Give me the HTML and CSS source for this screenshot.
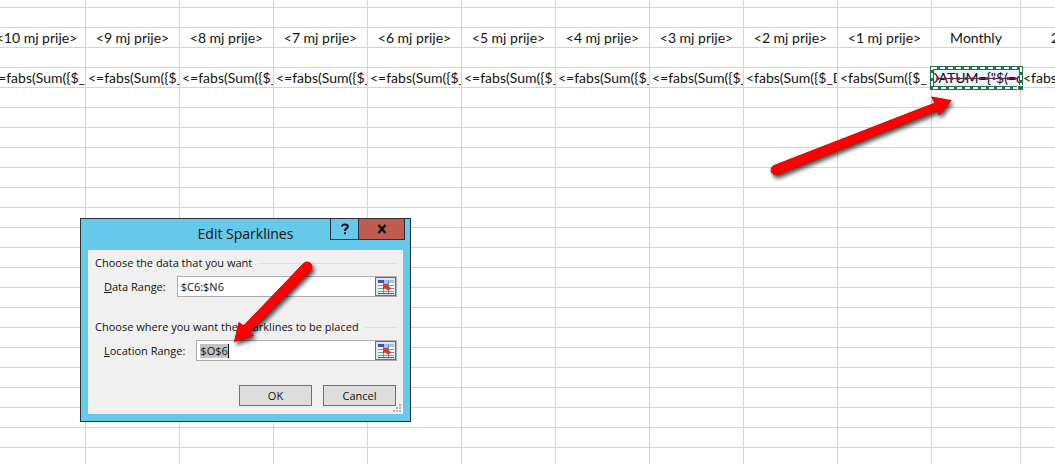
FILE: index.html
```
<!DOCTYPE html>
<html lang="en">
<head>
<meta charset="utf-8">
<title>Edit Sparklines</title>
<link rel="stylesheet" href="styles.css">
</head>
<body>
<main class="workbook">
<table class="sheet">
<colgroup><col class="col-first"><col span="9" class="col-month"><col class="col-monthly"><col class="col-rest"></colgroup>
<tbody>
<tr class="first"><td></td><td></td><td></td><td></td><td></td><td></td><td></td><td></td><td></td><td></td><td></td><td></td></tr>
<tr><td></td><td></td><td></td><td></td><td></td><td></td><td></td><td></td><td></td><td></td><td></td><td></td></tr>
<tr class="heads"><td>&lt;10 mj prije&gt;</td><td>&lt;9 mj prije&gt;</td><td>&lt;8 mj prije&gt;</td><td>&lt;7 mj prije&gt;</td><td>&lt;6 mj prije&gt;</td><td>&lt;5 mj prije&gt;</td><td>&lt;4 mj prije&gt;</td><td>&lt;3 mj prije&gt;</td><td>&lt;2 mj prije&gt;</td><td>&lt;1 mj prije&gt;</td><td>Monthly</td><td class="cut">2</td></tr>
<tr><td></td><td></td><td></td><td></td><td></td><td></td><td></td><td></td><td></td><td></td><td></td><td></td></tr>
<tr class="formulas"><td>&lt;=fabs(Sum({$_D</td><td>&lt;=fabs(Sum({$_</td><td>&lt;=fabs(Sum({$_</td><td>&lt;=fabs(Sum({$_</td><td>&lt;=fabs(Sum({$_</td><td>&lt;=fabs(Sum({$_</td><td>&lt;=fabs(Sum({$_</td><td>&lt;=fabs(Sum({$_</td><td>&lt;fabs(Sum({$_D</td><td>&lt;fabs(Sum({$_</td><td class="selected"><span class="clip"><span>DATUM={"$(=d</span></span>
<svg class="marquee" viewBox="0 0 93 24" aria-hidden="true">
<path d="M7 12.500H87" stroke="#2b3560" stroke-width="1"/>
<path d="M8 12.500H86" stroke="#d00020" stroke-width="3" stroke-linecap="round" stroke-dasharray="0 7"/>
<rect x="2" y="2" width="89" height="20" fill="none" stroke="#217346" stroke-width="4"/>
<rect x="2" y="2" width="89" height="20" fill="none" stroke="#fff" stroke-width="2" stroke-dasharray="5 3"/>
<path fill="#fff" d="M87 19h6v5h-6z"/>
<path fill="#217346" d="M88 20h5v4h-5z"/>
</svg></td><td>&lt;fabs(S</td></tr>
</tbody>
<tbody class="blank">
<tr><td></td><td></td><td></td><td></td><td></td><td></td><td></td><td></td><td></td><td></td><td></td><td></td></tr>
<tr><td></td><td></td><td></td><td></td><td></td><td></td><td></td><td></td><td></td><td></td><td></td><td></td></tr>
<tr><td></td><td></td><td></td><td></td><td></td><td></td><td></td><td></td><td></td><td></td><td></td><td></td></tr>
<tr><td></td><td></td><td></td><td></td><td></td><td></td><td></td><td></td><td></td><td></td><td></td><td></td></tr>
<tr><td></td><td></td><td></td><td></td><td></td><td></td><td></td><td></td><td></td><td></td><td></td><td></td></tr>
<tr><td></td><td></td><td></td><td></td><td></td><td></td><td></td><td></td><td></td><td></td><td></td><td></td></tr>
<tr><td></td><td></td><td></td><td></td><td></td><td></td><td></td><td></td><td></td><td></td><td></td><td></td></tr>
<tr><td></td><td></td><td></td><td></td><td></td><td></td><td></td><td></td><td></td><td></td><td></td><td></td></tr>
<tr><td></td><td></td><td></td><td></td><td></td><td></td><td></td><td></td><td></td><td></td><td></td><td></td></tr>
<tr><td></td><td></td><td></td><td></td><td></td><td></td><td></td><td></td><td></td><td></td><td></td><td></td></tr>
<tr><td></td><td></td><td></td><td></td><td></td><td></td><td></td><td></td><td></td><td></td><td></td><td></td></tr>
<tr><td></td><td></td><td></td><td></td><td></td><td></td><td></td><td></td><td></td><td></td><td></td><td></td></tr>
<tr><td></td><td></td><td></td><td></td><td></td><td></td><td></td><td></td><td></td><td></td><td></td><td></td></tr>
<tr><td></td><td></td><td></td><td></td><td></td><td></td><td></td><td></td><td></td><td></td><td></td><td></td></tr>
<tr><td></td><td></td><td></td><td></td><td></td><td></td><td></td><td></td><td></td><td></td><td></td><td></td></tr>
<tr><td></td><td></td><td></td><td></td><td></td><td></td><td></td><td></td><td></td><td></td><td></td><td></td></tr>
<tr><td></td><td></td><td></td><td></td><td></td><td></td><td></td><td></td><td></td><td></td><td></td><td></td></tr>
<tr><td></td><td></td><td></td><td></td><td></td><td></td><td></td><td></td><td></td><td></td><td></td><td></td></tr>
<tr class="last"><td></td><td></td><td></td><td></td><td></td><td></td><td></td><td></td><td></td><td></td><td></td><td></td></tr>
</tbody>
</table>

<form class="dialog" role="dialog" aria-labelledby="dialog-title">
<header class="titlebar">
<h1 class="title" id="dialog-title">Edit Sparklines</h1>
<div class="caption-buttons">
<button type="button" class="help" aria-label="Help"><svg width="10" height="12" viewBox="0 0 10 12"><path d="M2 3.500Q2.200 1.500 5 1.500Q7.800 1.500 7.800 3.500Q7.800 4.800 6.200 5.600Q5 6.200 5 8" fill="none" stroke="#111" stroke-width="2"/><path d="M4 9.200h2v2H4z" fill="#111"/></svg></button>
<button type="button" class="close" aria-label="Close"><svg width="10" height="10" viewBox="0 0 10 10"><path d="M1.500 1L8.500 9M8.500 1L1.500 9" stroke="#111" stroke-width="2.400"/></svg></button>
</div>
</header>
<div class="content">
<section class="group">
<h2 class="legend">Choose the data that you want</h2>
<div class="field">
<label for="data-range"><u>D</u>ata Range:</label>
<div class="picker"><input id="data-range" type="text" value="$C6:$N6"><button type="button" class="pick" aria-label="Select data range"><svg width="16" height="14" viewBox="0 0 16 14"><path fill="#fff" d="M0 0h16v14H0z"/><path fill="#a9c1ea" d="M0 0h16v3H0z"/><path fill="#3158ad" d="M0 0h6v3H0z"/><path d="M0 5.500H16M0 8.500H16M0 11.500H16M5.500 3V14M10.500 0V14" stroke="#6f91cb"/><path d="M0 13.500H16" stroke="#3158ad"/><path fill="#dc3c20" d="M5 3.500h6L9.700 5 13 8.500 10 11 7 8 5 9.500z"/></svg></button></div>
</div>
</section>
<section class="group">
<h2 class="legend">Choose where you want the sparklines to be placed</h2>
<div class="field">
<label for="location-range"><u>L</u>ocation Range:</label>
<div class="picker"><input id="location-range" class="marked" type="text" value="$O$6"><button type="button" class="pick" aria-label="Select location range"><svg width="16" height="14" viewBox="0 0 16 14"><path fill="#fff" d="M0 0h16v14H0z"/><path fill="#a9c1ea" d="M0 0h16v3H0z"/><path fill="#3158ad" d="M0 0h6v3H0z"/><path d="M0 5.500H16M0 8.500H16M0 11.500H16M5.500 3V14M10.500 0V14" stroke="#6f91cb"/><path d="M0 13.500H16" stroke="#3158ad"/><path fill="#dc3c20" d="M5 3.500h6L9.700 5 13 8.500 10 11 7 8 5 9.500z"/></svg></button></div>
</div>
</section>
<footer class="actions"><button type="submit" class="ok">OK</button><button type="button">Cancel</button></footer>
<svg class="grip" width="8" height="8" viewBox="0 0 8 8" aria-hidden="true"><path fill="#b5b5b5" d="M6 0h2v2H6zM3 3h2v2H3zM6 3h2v2H6zM0 6h2v2H0zM3 6h2v2H3zM6 6h2v2H6z"/></svg>
</div>
</form>

<svg class="arrows" width="1055" height="464" viewBox="0 0 1055 464" aria-hidden="true">
<g fill="#f00" stroke="#e00000" stroke-width="1">
<path d="M774 165.500L935 103L931.500 97L951 100.500L939 115L937 110.500L778 174.500A4.900 4.900 0 0 1 774 165.500Z"/>
<path d="M303.500 263.500L243.500 326L239 322.500L234.500 341.500L253.500 335.500L249.500 332.500L310.500 270.500A4.900 4.900 0 0 0 303.500 263.500Z"/>
</g>
</svg>
</main>
</body>
</html>
```
FILE: styles.css
```
* { box-sizing: border-box; }
body { margin: 0; background: #fff; color: #111; }
.workbook { position: relative; height: 100vh; overflow: hidden; }

.sheet { width: calc(100% + 12px); margin-left: -12px; table-layout: fixed; border-collapse: separate; border-spacing: 0; font: 14px/19px Lato, Carlito, sans-serif; }
.col-first { width: 98px; }
.col-month { width: 94px; }
.col-monthly { width: 89px; }
.sheet td { height: 20px; padding: 0; border: solid #d4d4d4; border-width: 0 1px 1px 0; overflow: hidden; white-space: nowrap; }
.sheet .first td { height: 8px; }
.sheet td:last-child { border-right: 0; }
.heads td { text-align: center; }
.heads .cut { padding-left: 30px; text-align: left; }
.formulas td { padding-left: 2px; }
.formulas .selected { position: relative; padding: 0; overflow: visible; background: #edf1fb; }
.clip { display: flex; justify-content: center; overflow: hidden; }
.marquee { position: absolute; left: -2px; top: -2px; width: 93px; height: 24px; }

.dialog { position: absolute; left: 80px; top: 218px; width: 331px; padding: 0 7px 7px; border: 1px solid #26323a; background: #66c9ea; font: 11px/16px "Open Sans", "Segoe UI", sans-serif; }
.titlebar { display: grid; grid-template-columns: 1fr; height: 30px; }
.title { grid-area: 1 / 1; margin: 0; font-size: 14px; font-weight: 400; line-height: 30px; text-align: center; }
.caption-buttons { grid-area: 1 / 1; justify-self: end; display: flex; height: 21px; margin-right: -2px; }
.caption-buttons button { display: grid; place-items: center; padding: 0; border: solid #26323a; border-width: 0 1px 1px; background: #66c9ea; }
.caption-buttons .help { width: 28px; border-right: 0; }
.caption-buttons .close { width: 47px; background: #c15b50; }
.content { position: relative; padding: 5px 6px 8px 7px; border-top: 1px solid #9dbccb; background: #f0f0f0; }
.group { display: grid; gap: 5px; margin-bottom: 22px; }
.legend { display: flex; align-items: center; gap: 6px; margin: 0; font-size: 11px; font-weight: 400; white-space: nowrap; }
.legend::after { content: ""; flex: 1; height: 1px; background: #d5e0ea; }
.field { display: flex; align-items: center; gap: 11px; padding-left: 9px; }
.picker { display: flex; flex: 1; height: 21px; border: 1px solid #abadb3; background: #fff; }
.picker input { flex: 1; min-width: 0; padding: 0 3px; border: 0; background: transparent; color: #111; font: inherit; outline: 0; }
.picker .marked { background: linear-gradient(90deg, #c3c3c3 28px, #111 28px) 3px center / 29px 14px no-repeat; }
.pick { display: grid; place-items: center; width: 21px; padding: 0; border: 1px solid #6d6d6d; background: #e4e4e4; }
.actions { display: flex; justify-content: flex-end; gap: 11px; margin-top: 24px; padding-right: 1px; }
.actions button { width: 73px; height: 21px; padding: 0; border: 1px solid #707070; background: #ddd; color: #111; font: inherit; }
.actions .ok { border-color: #3c7fb1; }
.grip { position: absolute; right: 2px; bottom: 2px; }

.arrows { position: absolute; left: 0; top: 0; pointer-events: none; filter: drop-shadow(2px 3px 2px rgba(0, 0, 0, .7)); }
```
